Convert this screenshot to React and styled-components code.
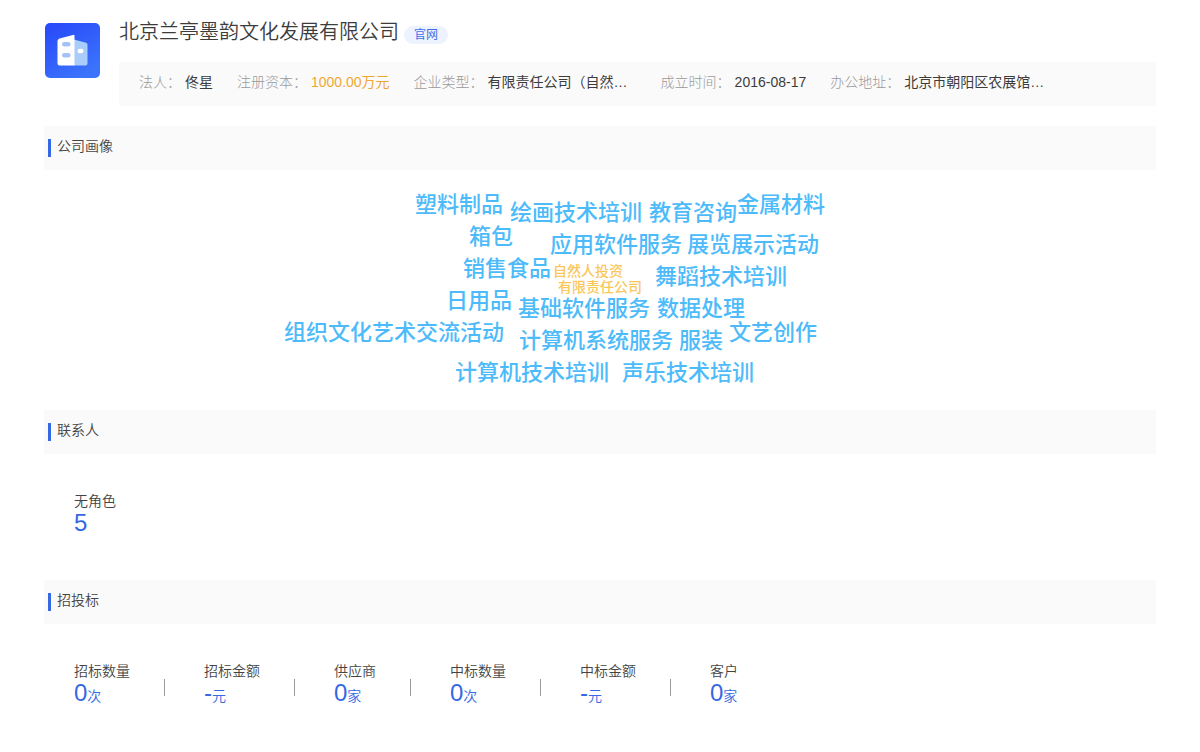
import styled, { createGlobalStyle } from "styled-components"

const GlobalStyle = createGlobalStyle`
  * {
    box-sizing: border-box;
  }

  body {
    margin: 0;
    background: #fff;
    color: #444;
    font-family: "Liberation Sans", "Noto Sans CJK SC", sans-serif;
    font-size: 14px;
    font-weight: 350;
    line-height: 20px;
  }

  h1, h2, dl, dt, dd {
    margin: 0;
    font-size: inherit;
    font-weight: inherit;
  }
`

const Page = styled.main`
  padding: 18px 44px 32px;
`

const Header = styled.header`
  display: flex;
  gap: 19px;
  margin-bottom: 20px;

  > svg {
    flex: none;
    margin-top: 4px;
  }
`

const Company = styled.div`
  flex: 1;
  min-width: 0;
`

const TitleRow = styled.div`
  display: flex;
  align-items: center;
  gap: 5px;
  margin-bottom: 16px;

  h1 {
    color: #3c3c3c;
    font-size: 20px;
    line-height: 28px;
  }
`

const SiteLink = styled.a`
  margin-top: 6px;
  padding: 0 10px;
  border-radius: 9px;
  background: #edf3fe;
  color: #3e70e6;
  font-size: 12px;
  font-weight: 400;
  line-height: 18px;
  text-decoration: none;
`

const InfoBar = styled.dl`
  display: flex;
  gap: 24px;
  padding: 10px 20px 14px;
  background: #fafafa;
`

const InfoItem = styled.div`
  display: flex;
  gap: 4px;
  white-space: nowrap;

  dt {
    color: #999;
    font-weight: 300;
  }

  dd {
    min-width: ${(props) => (props.$wide ? '149px' : '0')};
    color: ${(props) => (props.$highlight ? '#f0a732' : '#3c3c3c')};
    font-weight: 400;
  }
`

const SectionTitle = styled.h2`
  display: flex;
  align-items: center;
  gap: 6px;
  height: 44px;
  padding: 0 4px;
  background: #fafafa;

  &::before {
    content: "";
    width: 3px;
    height: 18px;
    background: #3568e4;
  }

  span {
    padding-bottom: 4px;
  }
`

const Cloud = styled.div`
  position: relative;
  height: 240px;
  overflow: hidden;
`

// x is measured from the middle of the cloud, y from its top
const Word = styled.span`
  position: absolute;
  left: calc(50% + ${(props) => props.$x}px);
  top: ${(props) => props.$y}px;
  color: ${(props) => (props.$small ? '#f9c75a' : '#4dbbfa')};
  font-size: ${(props) => (props.$small ? '14px' : '22px')};
  font-weight: 500;
  line-height: ${(props) => (props.$small ? '16px' : '32px')};
  white-space: nowrap;
`

const Stats = styled.dl`
  display: flex;
  min-height: 126px;
  padding: 37px 30px 0;
`

const Stat = styled.div`
  display: flex;

  & + &::before {
    content: "";
    width: 1px;
    height: 17px;
    margin: 18px 39px 0 34px;
    background: #999;
  }

  dd {
    color: #3568e4;
    line-height: 24px;
  }
`

const Figure = styled.span`
  font-size: 24px;
`

const info = [
  { label: '法人', value: '佟星' },
  { label: '注册资本', value: '1000.00万元', highlight: true },
  { label: '企业类型', value: '有限责任公司（自然…', wide: true },
  { label: '成立时间', value: '2016-08-17' },
  { label: '办公地址', value: '北京市朝阳区农展馆…', wide: true },
]

const words = [
  { text: '塑料制品', x: -185, y: 19 },
  { text: '绘画技术培训', x: -90, y: 27 },
  { text: '教育咨询', x: 49, y: 27 },
  { text: '金属材料', x: 137, y: 19 },
  { text: '箱包', x: -131, y: 51 },
  { text: '应用软件服务', x: -50, y: 59 },
  { text: '展览展示活动', x: 87, y: 59 },
  { text: '销售食品', x: -137, y: 83 },
  { text: '自然人投资', x: -47, y: 93, small: true },
  { text: '有限责任公司', x: -42, y: 109, small: true },
  { text: '舞蹈技术培训', x: 55, y: 91 },
  { text: '日用品', x: -154, y: 115 },
  { text: '基础软件服务', x: -82, y: 123 },
  { text: '数据处理', x: 57, y: 123 },
  { text: '组织文化艺术交流活动', x: -316, y: 147 },
  { text: '计算机系统服务', x: -81, y: 155 },
  { text: '服装', x: 79, y: 155 },
  { text: '文艺创作', x: 129, y: 147 },
  { text: '计算机技术培训', x: -145, y: 187 },
  { text: '声乐技术培训', x: 22, y: 187 },
]

const contacts = [{ label: '无角色', value: '5' }]

const bids = [
  { label: '招标数量', value: '0', unit: '次' },
  { label: '招标金额', value: '-', unit: '元' },
  { label: '供应商', value: '0', unit: '家' },
  { label: '中标数量', value: '0', unit: '次' },
  { label: '中标金额', value: '-', unit: '元' },
  { label: '客户', value: '0', unit: '家' },
]

function CompanyLogo() {
  return (
    <svg width="56" height="56" viewBox="0 0 56 56" aria-hidden="true">
      <defs>
        <linearGradient id="logoBg" x1="0" y1="0" x2="0.6" y2="1">
          <stop offset="0" stopColor="#2747fa" />
          <stop offset="1" stopColor="#3b73fb" />
        </linearGradient>
      </defs>
      <rect x="1" y="1" width="55" height="55" rx="5" fill="url(#logoBg)" />
      <path d="M30 17.5 L42 20.8 Q43.5 21.3 43.5 23 V41.5 Q43.5 43.5 41.5 43.5 H30 Z" fill="#a9ccfb" />
      <path d="M15.5 16.4 L29 12.9 Q30.5 12.5 30.5 14 V43.5 H15.5 Q13.5 43.5 13.5 41.5 V19 Q13.5 17 15.5 16.4 Z" fill="#fff" />
      <rect x="18" y="20" width="8.5" height="4.6" rx="2.3" fill="#a5c2f6" />
      <rect x="18" y="31" width="8.5" height="4.6" rx="2.3" fill="#a5c2f6" />
      <rect x="33.5" y="26.7" width="6" height="4.6" rx="2.3" fill="#fff" />
    </svg>
  )
}

function StatList({ items }) {
  return (
    <Stats>
      {items.map((item) => (
        <Stat key={item.label}>
          <div>
            <dt>{item.label}</dt>
            <dd>
              <Figure>{item.value}</Figure>
              {item.unit}
            </dd>
          </div>
        </Stat>
      ))}
    </Stats>
  )
}

export default function App() {
  return (
    <Page>
      <GlobalStyle />

      <Header>
        <CompanyLogo />
        <Company>
          <TitleRow>
            <h1>北京兰亭墨韵文化发展有限公司</h1>
            <SiteLink href="#">官网</SiteLink>
          </TitleRow>
          <InfoBar>
            {info.map((item) => (
              <InfoItem key={item.label} $wide={item.wide} $highlight={item.highlight}>
                <dt>{item.label}：</dt>
                <dd>{item.value}</dd>
              </InfoItem>
            ))}
          </InfoBar>
        </Company>
      </Header>

      <section>
        <SectionTitle><span>公司画像</span></SectionTitle>
        <Cloud>
          {words.map((word) => (
            <Word key={word.text} $x={word.x} $y={word.y} $small={word.small}>{word.text}</Word>
          ))}
        </Cloud>
      </section>

      <section>
        <SectionTitle><span>联系人</span></SectionTitle>
        <StatList items={contacts} />
      </section>

      <section>
        <SectionTitle><span>招投标</span></SectionTitle>
        <StatList items={bids} />
      </section>
    </Page>
  )
}
